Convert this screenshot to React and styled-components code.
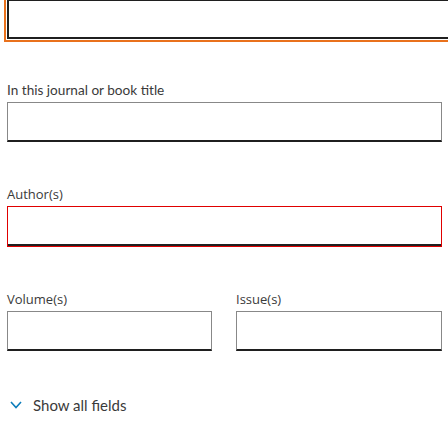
import React from 'react';
import styled, { createGlobalStyle } from 'styled-components';

const GlobalStyle = createGlobalStyle`
  html, body {
    margin: 0;
    padding: 0;
    background: #fff;
    overflow: hidden;
  }
`;

const Form = styled.div`
  width: 448px;
  height: 448px;
  box-sizing: border-box;
  padding: 0 6px 0 7px;
  display: flex;
  flex-direction: column;
  overflow: hidden;
`;

const Row = styled.div`
  display: grid;
  grid-template-columns: 205px 206px;
  column-gap: 24px;
  margin-top: ${(p) => p.$gap || 0}px;
`;

const Field = styled.div`
  display: flex;
  flex-direction: column;
  gap: 2px;
  margin-top: ${(p) => p.$gap || 0}px;
`;

const Label = styled.label`
  font-family: ${(p) => (p.$alt ? '"Open Sans", sans-serif' : 'Lato, sans-serif')};
  font-size: ${(p) => (p.$alt ? 13 : 13.6)}px;
  line-height: 20px;
  color: #3a3a3a;
  padding-top: ${(p) => (p.$alt ? 0 : 2)}px;
`;

const Input = styled.input`
  box-sizing: border-box;
  display: block;
  width: 100%;
  height: 40px;
  margin: 0;
  padding: 0 8px;
  border: 1px solid #888;
  border-bottom: 2px solid #1f1f1f;
  border-radius: 0;
  background: #fff;
  font: inherit;
`;

const FocusedInput = styled(Input)`
  flex: none;
  width: calc(100% + 30px);
  margin-top: -1px;
  border: 2px solid #1f1f1f;
  outline: 2px solid #e9711c;
  outline-offset: 1px;
`;

const ErrorBox = styled.div`
  box-sizing: border-box;
  height: 41px;
  border: 1px solid #e00000;
  display: flex;
  flex-direction: column;
`;

const ErrorInput = styled(Input)`
  flex: 1;
  height: auto;
  border: none;
  border-bottom: 2px solid #1f1f1f;
`;

const Toggle = styled.button`
  display: flex;
  align-items: center;
  gap: 11px;
  margin-top: 45px;
  padding: 0 0 0 3px;
  border: none;
  background: none;
  font-family: Lato, sans-serif;
  font-size: 15px;
  color: #3a3a3a;
  cursor: pointer;
  align-self: flex-start;
`;

const Chevron = () => (
  <svg width="12" height="8" viewBox="0 0 12 8">
    <polyline points="1,1 6,6.5 11,1" fill="none" stroke="#0c7dbb" strokeWidth="1.6" />
  </svg>
);

export default function App() {
  return (
    <>
      <GlobalStyle />
      <Form>
        <FocusedInput type="text" />
        <Field $gap={39}>
          <Label>In this journal or book title</Label>
          <Input type="text" />
        </Field>
        <Field $gap={42}>
          <Label $alt>Author(s)</Label>
          <ErrorBox>
            <ErrorInput type="text" />
          </ErrorBox>
        </Field>
        <Row $gap={42}>
          <Field>
            <Label $alt>Volume(s)</Label>
            <Input type="text" />
          </Field>
          <Field>
            <Label $alt>Issue(s)</Label>
            <Input type="text" />
          </Field>
        </Row>
        <Toggle type="button">
          <Chevron />
          Show all fields
        </Toggle>
      </Form>
    </>
  );
}
